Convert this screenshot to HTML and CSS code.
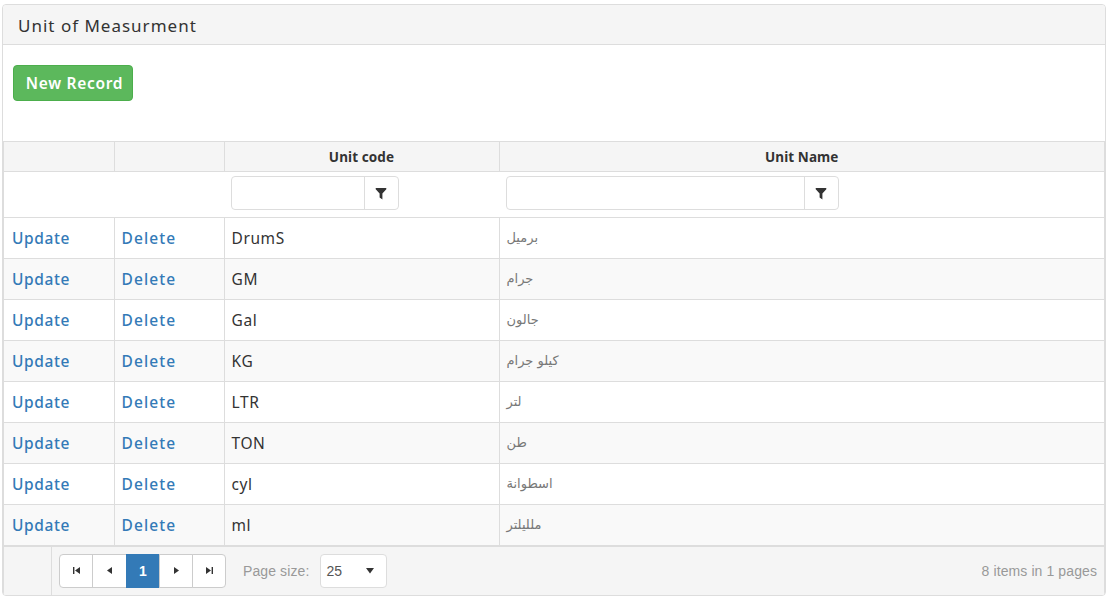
FILE: index.html
```html
<!DOCTYPE html>
<html lang="en">
<head>
<meta charset="utf-8">
<title>Unit of Measurment</title>
<link rel="stylesheet" href="styles.css">
</head>
<body>
<div class="panel">
  <div class="panel-heading">Unit of Measurment</div>
  <div class="panel-body"><a class="btn-new">New Record</a></div>
  <div class="grid">
    <table>
      <colgroup><col class="c1"><col class="c2"><col class="c3"><col></colgroup>
      <thead>
        <tr class="head"><th></th><th></th><th>Unit code</th><th>Unit Name</th></tr>
        <tr class="filter">
          <td class="blank" colspan="2"></td>
          <td><div class="fbox f1"><span class="finput"></span><span class="fbtn"><svg width="12" height="13" viewBox="0 0 12 13"><path d="M.7 1h10.600v1.300L7.400 6.500v6L4.600 10.500v-4L.7 2.300z" fill="#333"/></svg></span></div></td>
          <td><div class="fbox f2"><span class="finput"></span><span class="fbtn"><svg width="12" height="13" viewBox="0 0 12 13"><path d="M.7 1h10.600v1.300L7.400 6.500v6L4.600 10.500v-4L.7 2.300z" fill="#333"/></svg></span></div></td>
        </tr>
      </thead>
      <tbody>
        <tr><td><a>Update</a></td><td><a class="del">Delete</a></td><td>DrumS</td><td class="ar">برميل</td></tr>
        <tr class="alt"><td><a>Update</a></td><td><a class="del">Delete</a></td><td>GM</td><td class="ar">جرام</td></tr>
        <tr><td><a>Update</a></td><td><a class="del">Delete</a></td><td>Gal</td><td class="ar">جالون</td></tr>
        <tr class="alt"><td><a>Update</a></td><td><a class="del">Delete</a></td><td>KG</td><td class="ar">كيلو جرام</td></tr>
        <tr><td><a>Update</a></td><td><a class="del">Delete</a></td><td>LTR</td><td class="ar">لتر</td></tr>
        <tr class="alt"><td><a>Update</a></td><td><a class="del">Delete</a></td><td>TON</td><td class="ar">طن</td></tr>
        <tr><td><a>Update</a></td><td><a class="del">Delete</a></td><td>cyl</td><td class="ar">اسطوانة</td></tr>
        <tr class="alt"><td><a>Update</a></td><td><a class="del">Delete</a></td><td>ml</td><td class="ar">ملليلتر</td></tr>
      </tbody>
    </table>
    <div class="pager">
      <div class="pager-spacer"></div>
      <div class="pages">
        <span class="pg"><svg width="9" height="9" viewBox="0 0 9 9"><path d="M1 1h1.400v7H1zM8 1v7L3 4.500z" fill="#333"/></svg></span>
        <span class="pg wide"><svg width="9" height="9" viewBox="0 0 9 9"><path d="M7 1v7L2 4.500z" fill="#333"/></svg></span>
        <span class="pg on">1</span>
        <span class="pg"><svg width="9" height="9" viewBox="0 0 9 9"><path d="M2 1v7l5-3.500z" fill="#333"/></svg></span>
        <span class="pg"><svg width="9" height="9" viewBox="0 0 9 9"><path d="M1 1v7l5-3.500zM6.600 1H8v7H6.600z" fill="#333"/></svg></span>
      </div>
      <span class="size-label">Page size:</span>
      <div class="size"><span>25</span><svg width="10" height="7" viewBox="0 0 10 7"><path d="M1 1h8L5 6.500z" fill="#333"/></svg></div>
      <span class="info">8 items in 1 pages</span>
    </div>
  </div>
</div>
</body>
</html>
```

FILE: styles.css
```css
* { box-sizing: border-box; }
html, body { margin: 0; background: #fff; }
body {
  padding: 4px 0 0 2px;
  font-family: "Noto Sans", "DejaVu Sans", sans-serif;
  font-size: 15px;
  color: #333;
  overflow: hidden;
}
.panel {
  border: 1px solid #ddd;
  border-radius: 4px;
  height: 592px;
  background: #fff;
  overflow: hidden;
}
.panel-heading {
  height: 40px;
  padding: 0 15px;
  background: #f5f5f5;
  border-bottom: 1px solid #ddd;
  font-size: 17px;
  letter-spacing: 1px;
  line-height: 41px;
  border-radius: 3px 3px 0 0;
}
.panel-body { height: 96px; padding: 20px 10px 0; }
.btn-new {
  display: block;
  width: 120px;
  height: 36px;
  padding-left: 3px;
  background: #5cb85c;
  border: 1px solid #4cae4c;
  border-radius: 4px;
  color: #fff;
  font-weight: 600;
  font-size: 15.5px;
  letter-spacing: 0.7px;
  line-height: 34px;
  text-align: center;
}
.grid { border-left: 1px solid #ddd; border-right: 1px solid #ddd; border-top: 1px solid #ddd; }
table { width: 100%; border-collapse: collapse; table-layout: fixed; }
.c1 { width: 110px; }
.c2 { width: 110px; }
.c3 { width: 275px; }
th, td { padding: 0 7px; border-left: 1px solid #ddd; border-bottom: 1px solid #ddd; }
tr > :first-child { border-left: 0; }
.head th {
  height: 29px;
  padding-top: 2px;
  background: #f5f5f5;
  font-size: 13.5px;
  font-weight: 700;
  letter-spacing: 0.1px;
  text-align: center;
}
.filter td { height: 46px; border-left: 0; padding: 0 6px 2px 7px; }
.fbox {
  display: flex;
  height: 34px;
  border: 1px solid #ddd;
  border-radius: 4px;
  background: #fff;
}
.f1 { width: 168px; }
.f2 { width: 333px; }
.finput { flex: 1; }
.fbtn {
  width: 34px;
  padding-right: 1px;
  border-left: 1px solid #ddd;
  display: flex;
  align-items: center;
  justify-content: center;
}
tbody td { height: 41px; font-size: 15.5px; letter-spacing: 0.6px; }
tbody td:first-child { padding-left: 8px; }
tbody a { color: #337ab7; font-weight: 500; }
tbody a.del { letter-spacing: 1.1px; }
tr.alt td { background: #f9f9f9; }
tbody td.ar {
  font-family: "DejaVu Sans", sans-serif;
  font-size: 13px;
  letter-spacing: 0;
  color: #777;
  text-align: left;
}
.pager {
  display: flex;
  align-items: center;
  height: 50px;
  background: #f5f5f5;
  border-top: 1px solid #ddd;
  border-bottom: 1px solid #ddd;
  font-family: "Liberation Sans", Arial, sans-serif;
  font-size: 14px;
  letter-spacing: 0.1px;
  color: #999;
}
.pager-spacer { width: 48px; align-self: stretch; border-right: 1px solid #ddd; }
.pages { display: flex; margin-left: 7px; height: 34px; }
.pg {
  width: 34px;
  height: 34px;
  margin-left: -1px;
  background: #fff;
  border: 1px solid #ccc;
  display: flex;
  align-items: center;
  justify-content: center;
}
.pg.wide { width: 35px; }
.pg:first-child { margin-left: 0; border-radius: 4px 0 0 4px; }
.pg:last-child { border-radius: 0 4px 4px 0; }
.pg.on { background: #337ab7; border-color: #337ab7; color: #fff; font-weight: 700; }
.size-label { margin-left: 17px; }
.size {
  display: flex;
  align-items: center;
  justify-content: space-between;
  width: 67px;
  height: 34px;
  margin-left: 11px;
  padding: 0 11px 0 5px;
  background: #fff;
  border: 1px solid #ddd;
  border-radius: 4px;
  color: #555;
}
.info { margin-left: auto; padding-right: 7px; }
```
